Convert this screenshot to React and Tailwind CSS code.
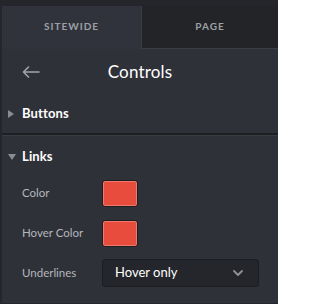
import React from 'react';

const font = { fontFamily: 'Lato, "Open Sans", sans-serif' };

function Swatch() {
  return (
    <div className="w-[36px] h-[27px] rounded-[3px] border border-[#1c1e22] bg-[#e74c3c] shadow-[inset_0_0_0_1px_#f07a6e]" />
  );
}

function Row({ label, children }) {
  return (
    <div className="flex items-center h-[40px] pl-[20px] shrink-0">
      <span className="w-[80px] text-[11.5px] text-[#b4b6bb]">{label}</span>
      {children}
    </div>
  );
}

export default function App() {
  return (
    <div
      className="w-[278px] h-[304px] bg-[#24262b] pt-[6px] pl-[2px] pb-[1px] flex flex-col overflow-hidden"
      style={font}
    >
      {/* tabs */}
      <div className="flex h-[43px] shrink-0">
        <div className="w-[139px] bg-[#30333b] flex items-center justify-center pb-[2px] text-[10px] font-bold tracking-[0.1em] text-[#9ea0a6]">
          SITEWIDE
        </div>
        <div className="flex-1 bg-[#222428] border-l border-b border-[#3a3d44] flex items-center justify-center pb-[2px] text-[10px] font-bold tracking-[0.1em] text-[#9ea0a6]">
          PAGE
        </div>
      </div>

      <div className="flex-1 bg-[#2f3139] flex flex-col">
        {/* header */}
        <div className="relative flex items-center justify-center h-[47px] shrink-0">
          <svg className="absolute left-[20px] top-[17px]" width="18" height="12" viewBox="0 0 18 12" fill="none" stroke="#a3a5aa" strokeWidth="1.6" strokeLinecap="round" strokeLinejoin="round">
            <path d="M17 6H1.5M6.5 1L1.5 6l5 5" />
          </svg>
          <span className="text-[17px] text-white tracking-[0.01em] mt-[-1px]">Controls</span>
        </div>

        {/* buttons */}
        <div className="flex items-center h-[37px] pl-[6px] pb-[2px] shrink-0">
          <svg width="6" height="8" viewBox="0 0 6 8" className="mr-[8px]">
            <path d="M0 0L6 4L0 8Z" fill="#8a8c92" />
          </svg>
          <span className="text-[13px] font-bold text-white tracking-[0.01em]">Buttons</span>
        </div>

        <div className="h-[3px] bg-[#1d1f23] border-b border-[#393c43] shrink-0" />

        {/* links */}
        <div className="flex items-center h-[37px] pl-[6px] pt-[5px] shrink-0">
          <svg width="8" height="6" viewBox="0 0 8 6" className="mr-[6px]">
            <path d="M0 0H8L4 6Z" fill="#8a8c92" />
          </svg>
          <span className="text-[13px] font-bold text-white tracking-[0.01em]">Links</span>
        </div>

        <Row label="Color">
          <Swatch />
        </Row>
        <Row label="Hover Color">
          <Swatch />
        </Row>
        <Row label="Underlines">
          <div className="w-[157px] h-[28px] rounded-[3px] border border-[#1b1d21] bg-[#24262b] flex items-center justify-between pl-[12px] pr-[15px]">
            <span className="text-[13px] text-white">Hover only</span>
            <svg width="10" height="6" viewBox="0 0 10 6" fill="none" stroke="#8e9096" strokeWidth="1.8" strokeLinecap="round" strokeLinejoin="round">
              <path d="M1 1l4 4 4-4" />
            </svg>
          </div>
        </Row>
      </div>
    </div>
  );
}
